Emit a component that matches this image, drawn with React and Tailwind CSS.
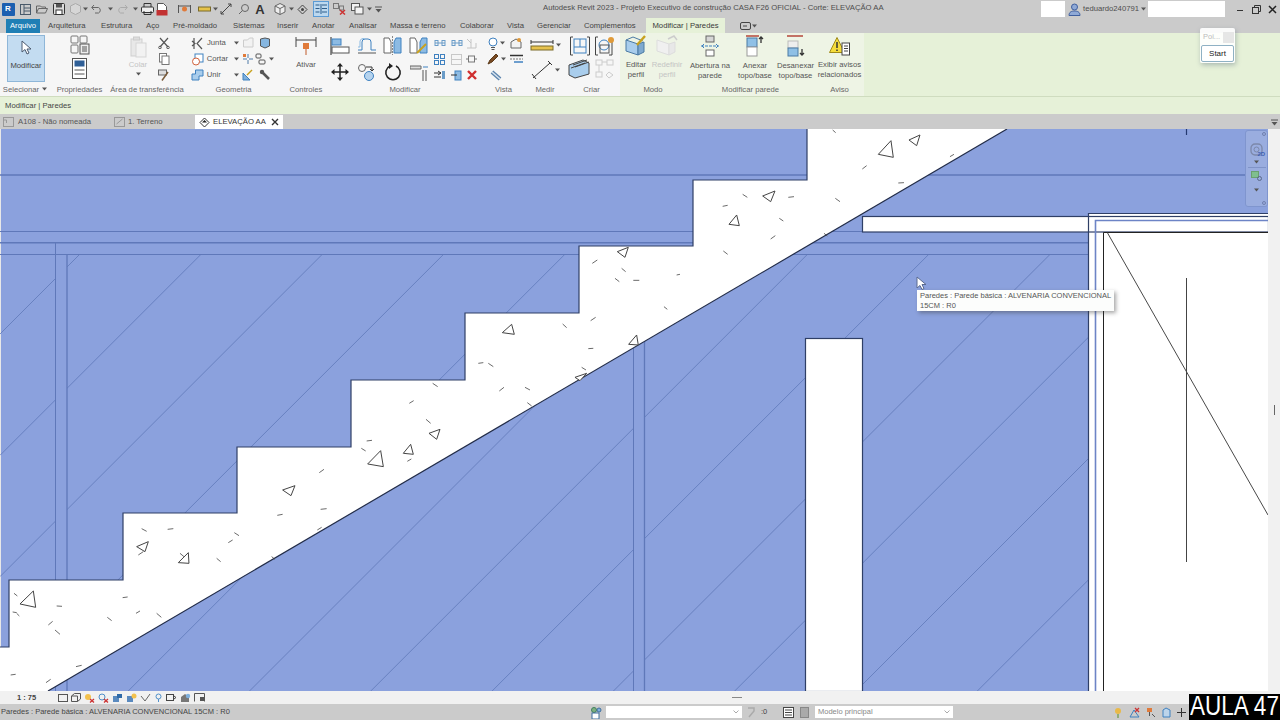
import React from "react";

const FONT = "font-['Liberation_Sans',Arial,sans-serif]";
const DK = "#4a4a4a";

const Ico = ({ w = 14, h = 14, className = "", children }) => (
  <svg width={w} height={h} viewBox={`0 0 ${w} ${h}`} fill="none" stroke={DK} strokeWidth="1" className={`shrink-0 ${className}`}>
    {children}
  </svg>
);
const Caret = () => (
  <svg width="5" height="4" viewBox="0 0 5 4" className="shrink-0"><path d="M0 .5h5L2.5 3.5z" fill="#555" /></svg>
);

/* ---------- quick access ---------- */
const Q = {
  logo: (
    <div className="w-[13px] h-[13px] bg-[#1c5fb0] rounded-[1px] flex items-center justify-center text-white text-[8px] font-bold leading-none">R</div>
  ),
  home: <Ico w={11} h={11}><rect x=".5" y=".5" width="10" height="10" stroke="#4a5a6a" /><path d="M4 .5v10M4 4h6.5M4 7h6.5" stroke="#4a5a6a" /></Ico>,
  open: <Ico w={12} h={10}><path d="M.5 9V2h4l1 1h4v1.5M.5 9l2-4.5h9L9.5 9z" stroke="#666" /></Ico>,
  save: <Ico w={12} h={12}><rect x=".5" y=".5" width="11" height="11" rx="1" fill="#dcdcdc" stroke="#333" /><rect x="3" y="1" width="6" height="3.5" fill="#555" stroke="none" /><rect x="3" y="7" width="6" height="4.5" fill="#fff" stroke="#333" /></Ico>,
  sync: <Ico w={11} h={12}><path d="M5.5.5l5 2.5v6l-5 2.5-5-2.5v-6z" fill="#d6d6d6" stroke="#aaa" /></Ico>,
  undo: <Ico w={12} h={10}><path d="M3 1 .7 3.5 3 6M1 3.5h6.5a3 3 0 010 5.5H4" stroke="#666" /></Ico>,
  redo: <Ico w={12} h={10}><path d="M9 1l2.3 2.5L9 6M11 3.5H4.500a3 3 0 000 5.500H8" stroke="#aaa" /></Ico>,
  print: <Ico w={13} h={12}><rect x=".5" y="4" width="12" height="5.500" rx="1" fill="#eee" stroke="#333" /><path d="M3 4V.5h7V4M3 8v3.500h7V8" stroke="#333" /></Ico>,
  pdf: <Ico w={12} h={13}><path d="M1.500.5h6l3 3v5h-9z" fill="#fff" stroke="#555" /><rect x=".5" y="7" width="11" height="5.500" fill="#c23232" stroke="none" /></Ico>,
  pin: <Ico w={13} h={12}><path d="M.5 2v8M12.500 2v8M.5 3h12" stroke="#555" /><circle cx="6.500" cy="6" r="2.500" fill="#e07a3a" stroke="none" /></Ico>,
  dim: <Ico w={13} h={10}><rect x=".5" y="3" width="12" height="4" fill="#e6c34a" stroke="#7a6a2a" /></Ico>,
  diag: <Ico w={12} h={12}><path d="M1 11 11 1M1 8v3h3M8 1h3v3" stroke="#444" /></Ico>,
  tag: <Ico w={11} h={11}><circle cx="7" cy="4" r="3.500" stroke="#666" /><path d="M1 10l3.500-3.500" stroke="#666" /></Ico>,
  cube: <Ico w={12} h={12}><path d="M6 .5l5 2.500v6l-5 2.500-5-2.500V3z" fill="#eee" stroke="#666" /><path d="M1 3l5 2.500L11 3M6 5.500v6" stroke="#666" /></Ico>,
  sect: <Ico w={11} h={11}><path d="M5.500 1 10 5.500 5.500 10 1 5.500z" stroke="#444" /><circle cx="5.500" cy="5.500" r="1.500" fill="#444" stroke="none" /></Ico>,
  thin: <div className="w-[16px] h-[16px] bg-[#bcd8ef] border border-[#5b9bd5] flex items-center justify-center"><Ico w={12} h={10}><path d="M.5 1h4M.5 4.500h4M.5 8h4M7 1h5M7 4.500h5M7 8h5M6 0v10" stroke="#2d5d8a" /></Ico></div>,
  closeW: <Ico w={13} h={12}><rect x=".5" y=".5" width="5" height="5" stroke="#777" /><rect x="6.500" y="3" width="4" height="4" stroke="#777" /><path d="M7 7l5 4.500M12 7l-5 4.500" stroke="#c33" strokeWidth="1.500" /></Ico>,
  switchW: <Ico w={13} h={12}><rect x=".5" y=".5" width="8" height="7" fill="#f3f3f3" stroke="#555" /><rect x="4" y="4" width="8" height="7" fill="#f3f3f3" stroke="#555" /></Ico>,
  dropdown: <Ico w={7} h={7}><path d="M0 1h7" stroke="#555" /><path d="M.5 3h6L3.500 6.500z" fill="#555" stroke="none" /></Ico>,
};

const QA = ({ w, children }) => <div style={{ width: w }} className="flex items-center justify-center h-full shrink-0">{children}</div>;

const TitleBar = () => (
  <div className="h-[18px] bg-[#cbcbcb] flex items-center relative text-[#4d4d4d]">
    <QA w={16}>{Q.logo}</QA>
    <QA w={18}>{Q.home}</QA>
    <QA w={16}>{Q.open}</QA>
    <QA w={18}>{Q.save}</QA>
    <QA w={14}>{Q.sync}</QA>
    <QA w={6}><Caret /></QA>
    <QA w={18}>{Q.undo}</QA>
    <QA w={8}><Caret /></QA>
    <QA w={16}>{Q.redo}</QA>
    <QA w={10}><Caret /></QA>
    <QA w={14}>{Q.print}</QA>
    <QA w={16}>{Q.pdf}</QA>
    <div className="w-[7px]" />
    <QA w={14}>{Q.pin}</QA>
    <div className="w-[5px]" />
    <QA w={16}>{Q.dim}</QA>
    <QA w={6}><Caret /></QA>
    <QA w={16}>{Q.diag}</QA>
    <QA w={18}>{Q.tag}</QA>
    <div className="w-[16px] text-[13px] font-bold leading-none text-[#333] text-center">A</div>
    <div className="w-[5px]" />
    <QA w={14}>{Q.cube}</QA>
    <QA w={8}><Caret /></QA>
    <QA w={14}>{Q.sect}</QA>
    <div className="w-[3px]" />
    <QA w={18}>{Q.thin}</QA>
    <QA w={18}>{Q.closeW}</QA>
    <QA w={18}>{Q.switchW}</QA>
    <QA w={6}><Caret /></QA>
    <QA w={12}>{Q.dropdown}</QA>
    <div className="ml-[159px] mb-[3px] text-[7.7px] leading-none whitespace-nowrap">
      Autodesk Revit 2023 - Projeto Executivo de construção CASA F26 OFICIAL - Corte: ELEVAÇÃO AA
    </div>
    <div className="ml-auto flex items-center h-full">
      <div className="w-[24px] h-[16px] bg-white" />
      <div className="w-[3px]" />
      <Ico w={13} h={13}><circle cx="6.500" cy="4" r="3" fill="#8fa9d6" stroke="#3f5f9f" /><path d="M1 12.500c0-3.500 2.500-4.500 5.500-4.500s5.500 1 5.500 4.500z" fill="#8fa9d6" stroke="#3f5f9f" /></Ico>
      <div className="ml-[2px] w-[58px] text-[7.7px] whitespace-nowrap">teduardo240791</div>
      <Caret />
      <div className="ml-[2px] w-[77px] h-[16px] bg-white" />
      <div className="w-[7px]" />
      <div className="w-[16px] flex justify-center"><div className="w-[6px] h-[1.500px] bg-[#333] mt-[3px]" /></div>
      <div className="w-[16px] flex justify-center">
        <Ico w={9} h={9}><rect x=".5" y="2.500" width="6" height="6" stroke="#333" /><path d="M2.500 2.500V.5h6v6H6.500" stroke="#333" /></Ico>
      </div>
      <div className="w-[16px] flex justify-center">
        <Ico w={9} h={9}><path d="M1 1l7 7M8 1 1 8" stroke="#222" strokeWidth="1.500" /></Ico>
      </div>
    </div>
  </div>
);

const TABS = [
  ["Arquitetura", 53],
  ["Estrutura", 45],
  ["Aço", 27],
  ["Pré-moldado", 60],
  ["Sistemas", 44],
  ["Inserir", 35],
  ["Anotar", 37],
  ["Analisar", 41],
  ["Massa e terreno", 70],
  ["Colaborar", 47],
  ["Vista", 30],
  ["Gerenciar", 47],
  ["Complementos", 62],
];

const TabRow = () => (
  <div className="h-[15px] bg-[#cbcbcb] flex items-end text-[7.7px] leading-none text-[#444]">
    <div className="ml-[6px] w-[34px] h-[14px] bg-[#1f7fb5] text-white flex items-center justify-center">Arquivo</div>
    <div className="w-[8px]" />
    {TABS.map(([t, w]) => (
      <div key={t} style={{ width: w }} className="h-[14px] flex items-center whitespace-nowrap">{t}</div>
    ))}
    <div className="w-[79px] h-[15px] bg-[#e6f1d8] flex items-center justify-center whitespace-nowrap text-[#3a3a3a]">Modificar | Paredes</div>
    <div className="ml-[15px] h-[14px] flex items-center gap-[1px]">
      <Ico w={11} h={8}><rect x=".5" y=".5" width="10" height="7" rx="1.500" stroke="#444" /><path d="M3 4h4" stroke="#444" /></Ico>
      <Caret />
    </div>
  </div>
);

/* ---------- ribbon ---------- */
const Panel = ({ w, label, green, children }) => (
  <div style={{ width: w }} className={`shrink-0 flex flex-col h-full ${green ? "bg-[#eef4e5]" : ""}`}>
    <div className="h-[50px] flex">{children}</div>
    <div className="h-[13px] flex items-center justify-center text-[7.7px] leading-none text-[#666] whitespace-nowrap">{label}</div>
  </div>
);
const Col = ({ w, children, className = "" }) => (
  <div style={{ width: w }} className={`flex flex-col items-center shrink-0 ${className}`}>{children}</div>
);
const Cell = ({ children, h = 16 }) => <div style={{ height: h }} className="flex items-center justify-center w-full">{children}</div>;

const Lbl = ({ a, b, gray }) => (
  <div className={`text-[7.7px] leading-[10px] text-center whitespace-nowrap mt-[4px] ${gray ? "text-[#c4c4c4]" : "text-[#555]"}`}>
    {a}<br />{b}
  </div>
);

const I = {
  arrow: <Ico w={12} h={16}><path d="M2 1v11l3-2.500L7 14l2-1-2-4h4z" fill="#fff" stroke="#4a5a70" /></Ico>,
  family: <Ico w={20} h={20}><rect x="1" y="1" width="7" height="7" rx="1" stroke="#777" /><rect x="10" y="1" width="7" height="7" rx="1" stroke="#777" /><rect x="1" y="10" width="7" height="8" rx="1" stroke="#777" /><rect x="10" y="9" width="9" height="10" fill="#eee" stroke="#555" /><path d="M12 12h5M12 14h5M12 16h5" stroke="#555" /></Ico>,
  props: <Ico w={15} h={21}><rect x=".5" y=".5" width="14" height="20" fill="#fff" stroke="#555" /><rect x="2.500" y="2.500" width="10" height="6" fill="#2f5f97" stroke="none" /><path d="M2.500 12h10M2.500 16h10" stroke="#555" /></Ico>,
  paste: <Ico w={17} h={22}><rect x="1" y="3" width="11" height="17" fill="#e8e8e8" stroke="#cfcfcf" /><rect x="6" y="7" width="10" height="14" fill="#f2f2f2" stroke="#d5d5d5" /><rect x="3.500" y="1" width="6" height="3" fill="#ddd" stroke="#ccc" /></Ico>,
  cut: <Ico w={12} h={12}><path d="M2 1l8 9M10 1 2 10" stroke="#555" strokeWidth="1.200" /><circle cx="2" cy="10.500" r="1.300" stroke="#555" /><circle cx="10" cy="10.500" r="1.300" stroke="#555" /></Ico>,
  copy: <Ico w={11} h={12}><rect x=".5" y=".5" width="7" height="8.500" fill="#fff" stroke="#777" /><rect x="3" y="3" width="7" height="8.500" fill="#fff" stroke="#777" /></Ico>,
  brush: <Ico w={12} h={12}><rect x=".5" y="1" width="8" height="5" fill="#ddd" stroke="#666" /><path d="M10 3 4 11.500" stroke="#7a5b3a" strokeWidth="1.500" /></Ico>,
  join: <Ico w={14} h={13}><path d="M3 1v11M1 4l3 2.500-3 2.500M11 1 6 6.500l5 5.500" stroke="#555" strokeWidth="1.200" /></Ico>,
  cutG: <Ico w={13} h={13}><rect x="4" y="1" width="8" height="8" fill="#fff" stroke="#3f81c0" /><circle cx="5" cy="8.500" r="3.500" fill="#fff" stroke="#d0603a" /></Ico>,
  unite: <Ico w={13} h={12}><path d="M4.500 1H12v6H8v4H1V5h3.500z" fill="#a9cdec" stroke="#3f81c0" /></Ico>,
  gPage: <Ico w={12} h={12}><path d="M1.500 3h4l2-2H11v9H1.500z" fill="#f2f2f2" stroke="#ccc" /></Ico>,
  gWall: <Ico w={12} h={12}><path d="M1.500 2 6 1l4.500 1v7L6 11 1.500 9z" fill="#86b6e0" stroke="#555" /></Ico>,
  gSplit: <Ico w={12} h={12}><path d="M1 6h4M7 6h4M6 1v4M6 7v4" stroke="#4f7aa8" /><rect x="1" y="1" width="3" height="3" fill="#e07a3a" stroke="none" /></Ico>,
  gShape: <Ico w={13} h={12}><rect x="1" y="1" width="5" height="4" rx="1" stroke="#555" /><rect x="4" y="7" width="6" height="4" rx="1" stroke="#555" /></Ico>,
  gCham: <Ico w={12} h={12}><path d="M1 11V4l7 7z" fill="#7fb0dd" stroke="#3f81c0" /><path d="M5 6l5-5" stroke="#c8a11e" strokeWidth="1.500" /></Ico>,
  wrench: <Ico w={12} h={12}><path d="M2 2l8 8" stroke="#555" strokeWidth="2.500" /><circle cx="3" cy="3" r="2.200" fill="#555" stroke="none" /></Ico>,
  align: <Ico w={20} h={18}><path d="M1 0v18" stroke="#555" strokeWidth="1.300" /><rect x="2" y="2" width="9" height="6" fill="#8dbbe3" stroke="#3f81c0" /><rect x="2" y="10" width="17" height="6" fill="#fff" stroke="#555" /></Ico>,
  offset: <Ico w={20} h={16}><path d="M1 12h4V4q0-3 3-3h3q3 0 3 3v8h5" stroke="#3f81c0" /><path d="M1 15h18" stroke="#555" /><path d="M1 9h2V3q0-2.500 5-3" stroke="#8dbbe3" /></Ico>,
  mirrorA: <Ico w={19} h={19}><path d="M1 2h5l2 4v11H1z" fill="#fff" stroke="#666" /><path d="M9.500 0v19" stroke="#888" strokeDasharray="2 1" /><path d="M18 2h-5l-2 4v11h7z" fill="#8dbbe3" stroke="#3f81c0" /></Ico>,
  mirrorB: <Ico w={19} h={19}><path d="M1 2h5l2 4v11H1z" fill="#fff" stroke="#666" /><path d="M18 2h-5l-2 4v11h7z" fill="#8dbbe3" stroke="#3f81c0" /><path d="M8 17 17 8" stroke="#c8a11e" strokeWidth="2" /></Ico>,
  move: <Ico w={18} h={18}><path d="M9 1v16M1 9h16" stroke="#222" strokeWidth="1.500" /><path d="M9 0l3 3.500H6zM9 18l-3-3.500h6zM0 9l3.500-3v6zM18 9l-3.500 3V6z" fill="#222" stroke="none" /></Ico>,
  copy2: <Ico w={18} h={18}><circle cx="5" cy="5" r="3.500" stroke="#666" /><circle cx="12" cy="13" r="4.500" fill="#b5d3ee" stroke="#3f81c0" /><path d="M9 4h6v4M13 6l2 2 2-2" stroke="#333" /></Ico>,
  rotate: <Ico w={18} h={18}><path d="M12 3a7.200 7.200 0 11-6 0" stroke="#222" strokeWidth="1.600" /><path d="M5 0v6l4-3z" fill="#222" stroke="none" /></Ico>,
  trim: <Ico w={18} h={19}><path d="M0 4h11v3H0z" fill="#ddd" stroke="#666" /><path d="M13 8v11M16 8v11" stroke="#555" /><path d="M13 5h5" stroke="#3f81c0" /></Ico>,
  sMir: <Ico w={12} h={10}><path d="M1 5h10" stroke="#6a9cc8" /><rect x="1" y="2.500" width="3" height="5" stroke="#6a9cc8" /><rect x="8" y="2.500" width="3" height="5" stroke="#6a9cc8" /></Ico>,
  sGrid: <Ico w={11} h={11}><rect x=".5" y=".5" width="4" height="4" stroke="#3f81c0" /><rect x="6.500" y=".5" width="4" height="4" stroke="#3f81c0" /><rect x=".5" y="6.500" width="4" height="4" stroke="#3f81c0" /><rect x="6.500" y="6.500" width="4" height="4" stroke="#3f81c0" /></Ico>,
  sGray: <Ico w={11} h={11}><rect x=".5" y=".5" width="10" height="10" stroke="#c8c8c8" /><path d="M.5 5.500h10" stroke="#c8c8c8" /></Ico>,
  sOff: <Ico w={11} h={11}><path d="M1 1l4 4M5 1v9M1 10h9V5" stroke="#c4c4c4" /></Ico>,
  sBox: <Ico w={11} h={10}><rect x="2.500" y="2" width="6" height="6" stroke="#777" /><path d="M0 5h2.500M8.500 5H11" stroke="#777" /></Ico>,
  sArr: <Ico w={11} h={10}><path d="M0 3h7M4 1l3 2-3 2M0 7h7" stroke="#333" /><rect x="8" y="1" width="3" height="8" fill="#6a9cc8" stroke="none" /></Ico>,
  sArrB: <Ico w={11} h={11}><rect x="4" y="1" width="6" height="9" fill="#8dbbe3" stroke="#3f81c0" /><path d="M0 5h6" stroke="#333" /></Ico>,
  redX: <Ico w={10} h={10}><path d="M1 1l8 8M9 1 1 9" stroke="#cf2e2e" strokeWidth="2.400" /></Ico>,
  bulb: <Ico w={10} h={13}><circle cx="5" cy="5" r="4" fill="#fff" stroke="#3f81c0" /><path d="M3 10.500h4M3.500 12.500h3" stroke="#555" /></Ico>,
  house: <Ico w={12} h={12}><path d="M1 11V5l5-3 5 3v6z" fill="#f2f2f2" stroke="#666" /><circle cx="9" cy="3" r="2" fill="#e09a3a" stroke="none" /></Ico>,
  pen: <Ico w={12} h={12}><path d="M1 11l2-4 6-6 2 2-6 6z" fill="#7a4a22" stroke="#5a3a1a" /></Ico>,
  lines: <Ico w={13} h={10}><path d="M0 1.500h13" stroke="#333" strokeWidth="1.500" /><path d="M0 5h13" stroke="#777" strokeDasharray="2 1" /><path d="M4 8h9" stroke="#3f81c0" strokeWidth="1.500" /></Ico>,
  link: <Ico w={12} h={12}><path d="M2 3l8 7" stroke="#5b83ad" strokeWidth="4" /><path d="M2 3l8 7" stroke="#d7e3ee" strokeWidth="1.500" /></Ico>,
  ruler: <Ico w={24} h={16}><path d="M1 5h22M1 3v4M23 3v4" stroke="#333" /><rect x="1" y="9" width="22" height="4" fill="#e7c34f" stroke="#7a6a2a" /></Ico>,
  dimD: <Ico w={22} h={20}><path d="M2 18 19 3M1 14l4 5M17 1l4 4" stroke="#333" /></Ico>,
  bracket: <Ico w={20} h={20}><path d="M3 1H.5v18H3M17 1h2.500v18H17" stroke="#444" /><rect x="4" y="3" width="12" height="14" stroke="#3f81c0" /><path d="M4 11h12M10 3v8" stroke="#3f81c0" /></Ico>,
  bracket2: <Ico w={20} h={20}><path d="M3 1H.5v18H3M17 4v15h-3" stroke="#444" /><circle cx="9" cy="9" r="5" stroke="#3f81c0" /><rect x="5" y="9" width="9" height="8" stroke="#555" /><circle cx="16" cy="4" r="3" fill="#e09a3a" stroke="none" /></Ico>,
  group: <Ico w={22} h={20}><path d="M1 6l14-5 6 3v11L7 19l-6-3z" fill="#a9cdec" stroke="#444" /><path d="M5 6l14-5M3 9l14-5M7 8l14-5" stroke="#444" /></Ico>,
  grayGroup: <Ico w={19} h={20}><rect x="1" y="1" width="6" height="5" stroke="#ccc" /><rect x="12" y="1" width="6" height="5" stroke="#ccc" /><rect x="1" y="13" width="6" height="5" stroke="#ccc" /><path d="M14 13l4 3-4 3-3-3z" stroke="#ccc" /><path d="M7 3h5M4 6v7" stroke="#ccc" /></Ico>,
  edit: <Ico w={22} h={21}><path d="M1 5l12 4v11L1 16z" fill="#a9cdec" stroke="#4b7aa4" /><path d="M13 9l6-2v10l-6 3z" fill="#7fa9cf" stroke="#4b7aa4" /><path d="M1 5l7-3 10 4" stroke="#4b7aa4" /><path d="M12 10l8-9" stroke="#c8a11e" strokeWidth="2.400" /></Ico>,
  reset: <Ico w={22} h={21}><path d="M1 5l12 4v11L1 16z" fill="#f0f0f0" stroke="#ddd" /><path d="M13 9l6-2v10l-6 3z" fill="#e8e8e8" stroke="#ddd" /><path d="M12 4l6-3 3 4" stroke="#ccc" strokeWidth="1.500" /></Ico>,
  opening: <Ico w={18} h={22}><rect x="5" y="1" width="8" height="6" fill="#d6d6d6" stroke="#666" /><rect x="5" y="15" width="8" height="6" fill="#fff" stroke="#666" /><path d="M0 11h18" stroke="#3f81c0" strokeDasharray="3 1" /><path d="M3 9l-2 2 2 2M15 9l2 2-2 2" stroke="#3f81c0" /></Ico>,
  attach: <Ico w={18} h={22}><path d="M0 1h13" stroke="#b5473a" strokeWidth="1.500" /><rect x="1" y="3" width="10" height="9" fill="#8fc0e6" stroke="#4b7aa4" /><rect x="1" y="12" width="10" height="9" fill="#fff" stroke="#999" /><path d="M15 8V2M13 4l2-2 2 2" stroke="#333" strokeWidth="1.300" /></Ico>,
  detach: <Ico w={18} h={22}><path d="M0 1h16" stroke="#b5473a" strokeWidth="1.500" /><rect x="1" y="6" width="10" height="7" fill="#eee" stroke="#bbb" /><rect x="1" y="13" width="10" height="8" fill="#8fc0e6" stroke="#4b7aa4" /><path d="M15 14v6M13 18l2 2 2-2" stroke="#333" strokeWidth="1.300" /></Ico>,
  warn: <Ico w={21} h={20}><path d="M8 1.500l7.500 15H.5z" fill="#f5dc3c" stroke="#a08a1a" /><path d="M8 6v6M8 13.500v1.500" stroke="#333" strokeWidth="1.500" /><rect x="13" y="7" width="7.500" height="12" fill="#fff" stroke="#444" /><path d="M15 10h4M15 12.500h4M15 15h4" stroke="#444" /></Ico>,
};

const Dd = ({ icon, text }) => (
  <div className="flex items-center h-[16px] w-full gap-[2px]">
    <div className="w-[14px] flex justify-center">{icon}</div>
    <span className="text-[7.7px] text-[#555] w-[26px] leading-none">{text}</span>
    <Caret />
  </div>
);

const Ribbon = () => (
  <div className="h-[64px] bg-[#e6f1d8] flex border-b border-[#cfdcbf]">
    <div className="flex h-full w-[620px] bg-[#f6f6f6] shrink-0">
      <Panel w={50} label={<span className="flex items-center gap-[3px]">Selecionar <Caret /></span>}>
        <div className="ml-[7px] mt-[2px] w-[38px] h-[47px] bg-[#c3dcf1] border border-[#8eb6d8] flex flex-col items-center pt-[4px] gap-[6px] text-[7.7px] leading-none text-[#444]">
          {I.arrow}
          <span>Modificar</span>
        </div>
      </Panel>
      <Panel w={59} label="Propriedades">
        <Col w={59} className="pt-[2px] gap-[3px]">
          {I.family}
          {I.props}
        </Col>
      </Panel>
      <Panel w={76} label="Área de transferência">
        <Col w={44} className="pt-[3px] pl-[14px]">
          {I.paste}
          <span className="text-[7.7px] text-[#c4c4c4] mt-[3px] leading-none">Colar</span>
          <span className="mt-[3px]"><Caret /></span>
        </Col>
        <Col w={22} className="pt-[2px]">
          <Cell>{I.cut}</Cell><Cell>{I.copy}</Cell><Cell>{I.brush}</Cell>
        </Col>
      </Panel>
      <Panel w={97} label="Geometria">
        <Col w={54} className="pt-[2px] pl-[6px]">
          <Dd icon={I.join} text="Junta" />
          <Dd icon={I.cutG} text="Cortar" />
          <Dd icon={I.unite} text="Unir" />
        </Col>
        <Col w={17} className="pt-[2px]">
          <Cell>{I.gPage}</Cell><Cell>{I.gSplit}</Cell><Cell>{I.gCham}</Cell>
        </Col>
        <Col w={17} className="pt-[2px]">
          <Cell>{I.gWall}</Cell>
          <Cell><span className="flex items-center gap-[1px]">{I.gShape}<Caret /></span></Cell>
          <Cell>{I.wrench}</Cell>
        </Col>
      </Panel>
      <Panel w={48} label="Controles">
        <Col w={48} className="pt-[3px] gap-[6px]">
          <Ico w={22} h={20}><path d="M1 1v10M21 1v10M1 4h20" stroke="#444" /><rect x="8" y="7" width="6" height="6" fill="#e07a3a" stroke="none" /><path d="M11 13v6" stroke="#c05a2a" /></Ico>
          <span className="text-[7.7px] text-[#555] leading-none -mt-[1px]">Ativar</span>
        </Col>
      </Panel>
      <Panel w={150} label="Modificar">
        <div className="flex pt-[2px]">
          <div className="flex flex-col w-[101px] gap-[5px]">
            <div className="flex items-center justify-between h-[21px] pr-[3px]">{I.align}{I.offset}{I.mirrorA}{I.mirrorB}</div>
            <div className="flex items-center justify-between h-[21px] pr-[3px] pl-[1px]">{I.move}{I.copy2}{I.rotate}{I.trim}</div>
          </div>
          <Col w={17}><Cell>{I.sMir}</Cell><Cell>{I.sGrid}</Cell><Cell>{I.sArr}</Cell></Col>
          <Col w={17}><Cell>{I.sMir}</Cell><Cell>{I.sGray}</Cell><Cell>{I.sArrB}</Cell></Col>
          <Col w={13}><Cell>{I.sOff}</Cell><Cell>{I.sBox}</Cell><Cell>{I.redX}</Cell></Col>
        </div>
      </Panel>
      <Panel w={47} label="Vista">
        <Col w={26} className="pt-[2px] pl-[6px]">
          <Cell><span className="flex items-center gap-[2px]">{I.bulb}<Caret /></span></Cell>
          <Cell><span className="flex items-center gap-[2px]">{I.pen}<Caret /></span></Cell>
          <Cell>{I.link}</Cell>
        </Col>
        <Col w={20} className="pt-[2px]"><Cell>{I.house}</Cell><Cell>{I.lines}</Cell></Col>
      </Panel>
      <Panel w={36} label="Medir">
        <Col w={36} className="pt-[4px] gap-[7px]">
          <span className="flex items-center gap-[2px]">{I.ruler}<Caret /></span>
          <span className="flex items-center gap-[2px]">{I.dimD}<Caret /></span>
        </Col>
      </Panel>
      <Panel w={57} label="Criar">
        <Col w={27} className="pt-[3px] gap-[3px] items-end">{I.bracket}{I.group}</Col>
        <Col w={26} className="pt-[3px] gap-[3px] pl-[3px]">{I.bracket2}{I.grayGroup}</Col>
      </Panel>
    </div>
    <Panel w={66} label="Modo" green>
      <Col w={32} className="pt-[2px]">{I.edit}<Lbl a="Editar" b="perfil" /></Col>
      <Col w={30} className="pt-[2px]">{I.reset}<Lbl a="Redefinir" b="perfil" gray /></Col>
    </Panel>
    <Panel w={129} label="Modificar parede" green>
      <Col w={48} className="pt-[2px]">{I.opening}<Lbl a="Abertura na" b="parede" /></Col>
      <Col w={42} className="pt-[2px]">{I.attach}<Lbl a="Anexar" b="topo/base" /></Col>
      <Col w={39} className="pt-[2px]">{I.detach}<Lbl a="Desanexar" b="topo/base" /></Col>
    </Panel>
    <Panel w={49} label="Aviso" green>
      <Col w={49} className="pt-[3px]">{I.warn}<Lbl a="Exibir avisos" b="relacionados" /></Col>
    </Panel>
  </div>
);

const ViewTabs = () => (
  <div className="h-[15px] bg-[#cbcbcb] flex items-end text-[7.7px] leading-none text-[#555] relative">
    <div className="w-[114px] h-[14px] flex items-center pl-[3px] gap-[4px]">
      <Ico w={11} h={10}><rect x=".5" y=".5" width="10" height="9" stroke="#999" /><path d="M.5 3h3v3" stroke="#999" /></Ico>
      A108 - Não nomeada
    </div>
    <div className="w-[81px] h-[14px] flex items-center gap-[3px]">
      <Ico w={11} h={10}><rect x=".5" y=".5" width="10" height="9" stroke="#999" /><path d="M2.500 7l6-5" stroke="#999" /></Ico>
      1. Terreno
    </div>
    <div className="w-[88px] h-[14px] bg-white flex items-center pl-[4px] text-[#333]">
      <Ico w={11} h={11}><path d="M5.500 1 10 5.500 5.500 10 1 5.500z" stroke="#333" /><path d="M3 5.500 5.500 3l2.500 2.500z" fill="#222" stroke="none" /></Ico>
      <span className="ml-[3px] w-[58px] whitespace-nowrap">ELEVAÇÃO AA</span>
      <Ico w={8} h={8}><path d="M1 1l6 6M7 1 1 7" stroke="#333" strokeWidth="1.400" /></Ico>
    </div>
    <div className="ml-auto mr-[2px] mb-[3px]">{Q.dropdown}</div>
  </div>
);

/* ---------- drawing ---------- */
const WALL = "#8ba1dd";
const LINE = "#5f78b9";
const HATCH = Array.from({ length: 15 }, (_, i) => 91 + i * 121.3);

const TRIS7 = [[100,483,60,522,107,532],[445,335,410,350,435,365],[565,368,535,398,567,400],[885,167,848,180,873,197]];
const DASH7 = [[42,490,52,498],[38,546,50,548],[50,550,58,558],[170,528,186,529],[145,585,158,574],[165,600,180,613],[32,735,47,733],[138,758,152,748],[228,710,245,706],[425,296,440,304],[503,298,520,296],[415,375,430,365],[540,370,552,380],[650,385,662,395],[685,338,698,330],[703,308,717,317],[832,256,848,253],[958,128,972,118],[962,238,980,236],[952,300,965,292],[815,380,825,388],[368,503,383,501],[408,550,420,543],[322,562,335,572],[470,550,484,562]];
const TRIS8 = [[515,253,487,278,523,283],[890,285,866,313,895,315],[740,400,705,412,720,422],[300,568,267,580,290,598],[212,613,190,640,220,643],[122,632,83,672,130,680],[865,22,832,35,855,52]];
const DASH8 = [[757,70,772,60],[845,85,857,95],[825,115,838,125],[880,121,898,121],[1010,105,1020,103],[972,200,982,208],[752,242,767,232],[668,252,680,263],[745,326,760,325],[725,382,738,390],[415,370,430,368],[445,370,460,380],[478,453,492,442],[555,442,570,450],[562,488,575,498],[278,430,293,440],[208,490,221,482],[258,538,272,550],[80,603,96,601],[64,625,77,633],[202,664,214,657]];
const TRIS9 = [[633,47,595,88,640,97],[720,30,687,45,710,62],[285,198,248,213,272,230],[170,270,147,298,178,302]];
const DASH9 = [[458,15,467,23],[547,132,560,122],[810,95,822,88],[655,174,672,173],[466,220,480,230],[325,217,342,215],[188,208,202,217],[128,244,143,241],[298,280,310,288],[272,342,286,332],[130,378,143,388],[432,325,442,333]];

const Marks = ({ ox, oy, tris, dashes }) => (
  <g transform={`translate(${ox} ${oy}) scale(0.3333)`}>
    {tris.map((t, i) => (
      <polygon key={i} points={t.join(" ")} fill="#fff" stroke="#444" strokeWidth="1" vectorEffect="non-scaling-stroke" />
    ))}
    {dashes.map((d, i) => (
      <line key={i} x1={d[0]} y1={d[1]} x2={d[2]} y2={d[3]} stroke="#444" strokeWidth="0.8" vectorEffect="non-scaling-stroke" />
    ))}
  </g>
);

const Drawing = () => (
  <svg width="1268" height="562" viewBox="0 129 1268 562" className="block shrink-0">
    <rect x="0" y="129" width="1268" height="562" fill={WALL} />
    <rect x="0" y="129" width="1" height="562" fill="#e8e8e8" />
    <path d="M0 175H1268" stroke={LINE} strokeWidth="1.500" />
    <path d="M0 231.500H1088M0 254.500H1088" stroke={LINE} strokeWidth="1" />
    <path d="M0 242.800H1088" stroke={LINE} strokeWidth="1.500" />
    <g stroke={LINE} strokeWidth="0.8">
      {HATCH.map((s, i) => {
        const sum = s + 243;
        return <line key={i} x1={Math.max(0, sum - 691)} y1={Math.min(691, sum)} x2={sum - 254.500} y2="254.500" />;
      })}
    </g>
    <rect x="55.500" y="255" width="11.500" height="436" fill={WALL} />
    <rect x="633" y="340" width="11" height="351" fill={WALL} />
    <path d="M55.500 243V691M633.500 340V691" stroke={LINE} strokeWidth="1" />
    <path d="M67 255V691M644.500 340V691" stroke={LINE} strokeWidth="1.300" />
    <polygon
      points="0,647 9,647 9,580 123,580 123,513 237,513 237,447 351,447 351,380 465,380 465,313 579,313 579,246 693,246 693,180 807,180 807,129 1007,129 48,691 0,691"
      fill="#fff"
    />
    <path d="M0 647H9V580H123V513H237V447H351V380H465V313H579V246H693V180H807V129" stroke="#2f3f66" strokeWidth="1.200" fill="none" />
    <path d="M1007 129 48 691" stroke="#222c48" strokeWidth="1.200" />
    <Marks ox={0} oy={430} tris={TRIS7} dashes={DASH7} />
    <Marks ox={340} oy={240} tris={TRIS8} dashes={DASH8} />
    <Marks ox={680} oy={125} tris={TRIS9} dashes={DASH9} />
    <rect x="805.500" y="338.500" width="57" height="353" fill="#fff" stroke="#2f3f66" strokeWidth="1.200" />
    <rect x="1088" y="213" width="180" height="478" fill="#fff" />
    <rect x="862.500" y="216.500" width="406" height="15.500" fill="#fff" stroke="#2f3f66" strokeWidth="1.200" />
    <path d="M1088.500 691V213.500H1268" stroke="#2f3f66" strokeWidth="1.200" fill="none" />
    <path d="M1095.500 691V220.500H1268" stroke="#6d84c6" strokeWidth="1.600" fill="none" />
    <path d="M1103.500 691V232.500H1268" stroke="#222" strokeWidth="1" fill="none" />
    <path d="M1107 232 1268 515" stroke="#333" strokeWidth="0.9" />
    <path d="M1186.500 278V562" stroke="#444" strokeWidth="1" />
    <path d="M1186.500 129V135" stroke="#24386f" strokeWidth="1.200" />
  </svg>
);

const NavBar = () => (
  <div className="absolute left-[1245px] top-[1px] w-[23px] h-[77px] rounded-[3px] bg-[#9aaddf] border border-[#7f95ce] flex flex-col items-center">
    <div className="self-end mr-[1px] mt-[1px] w-[4px] h-[4px] rounded-full border border-[#6f7fae]" />
    <div className="mt-[7px] relative">
      <Ico w={14} h={14}><rect x="1" y="1" width="11" height="11" rx="4" stroke="#7c88aa" strokeWidth="1.300" /><circle cx="6.500" cy="6.500" r="2.500" stroke="#7c88aa" /></Ico>
      <span className="absolute left-[8px] top-[8px] text-[6px] leading-none font-bold text-[#3e5fb0]">2D</span>
    </div>
    <div className="mt-[3px]"><Caret /></div>
    <div className="mt-[3px] w-[18px] h-[1px] bg-[#8094c8]" />
    <div className="mt-[3px] relative">
      <Ico w={12} h={11}><rect x=".5" y=".5" width="7" height="6" fill="#7fbf8f" stroke="#6aa070" /><circle cx="8.500" cy="7.500" r="2" stroke="#5a6a8a" /></Ico>
    </div>
    <div className="mt-[6px]"><Caret /></div>
    <div className="mt-auto self-end mr-[1px] mb-[1px] w-[4px] h-[4px] rounded-full border border-[#6f7fae]" />
  </div>
);

const ViewBar = () => (
  <div className="h-[13px] bg-[#f1f1f1] flex items-center relative">
    <span className="ml-[17px] w-[41px] text-[7.5px] font-bold text-[#444] leading-none">1 : 75</span>
    <div className="flex items-center gap-[3px]">
      <Ico w={10} h={8}><rect x=".5" y=".5" width="9" height="7" stroke="#555" /></Ico>
      <Ico w={10} h={9}><path d="M.5 3h6v5.500H.5zM.5 3l3-2.500h6V6L6.500 8.500" stroke="#555" /></Ico>
      <Ico w={11} h={10}><circle cx="4" cy="4" r="3" fill="#f2c14e" stroke="none" /><path d="M6 6l4 3.500M10 6 6 9.500" stroke="#c33" strokeWidth="1.300" /></Ico>
      <Ico w={11} h={10}><circle cx="4" cy="4" r="3" stroke="#4f8fc9" /><path d="M6 6l4 3.500M10 6 6 9.500" stroke="#c33" strokeWidth="1.300" /></Ico>
      <Ico w={11} h={10}><rect x="1" y="3" width="6" height="6" fill="#5a8abf" stroke="none" /><rect x="5" y="1" width="5" height="4" fill="#2f6aa8" stroke="none" /></Ico>
      <Ico w={11} h={10}><rect x="1" y="3" width="6" height="6" fill="#5a8abf" stroke="none" /><circle cx="8" cy="3" r="2.500" fill="#f2c14e" stroke="none" /></Ico>
      <Ico w={11} h={10}><path d="M1 3l4 5 5-7" stroke="#666" /></Ico>
      <Ico w={9} h={10}><circle cx="4.500" cy="3.500" r="2.500" stroke="#4f8fc9" /><path d="M4.500 6v3" stroke="#4f8fc9" /></Ico>
      <Ico w={11} h={9}><rect x=".5" y="1.500" width="7" height="6" stroke="#444" /><path d="M8 3l2 1.500L8 6" stroke="#444" /></Ico>
      <Ico w={11} h={10}><path d="M1 9V4l4-3 4 3v5z" fill="#777" stroke="none" /><circle cx="8" cy="3" r="2.200" fill="#7fb0dd" stroke="none" /></Ico>
      <Ico w={11} h={9}><path d="M.5 8.500V.5h10v8" stroke="#555" /><rect x="6" y="4" width="4" height="4" fill="#555" stroke="none" /></Ico>
    </div>
    <div className="absolute left-[732px] top-[6px] w-[10px] h-[1px] bg-[#888]" />
  </div>
);

const StatusBar = () => (
  <div className="h-[16px] bg-[#cbcbcb] flex items-center text-[7.5px] leading-none text-[#444]">
    <span className="ml-[1px] w-[589px] whitespace-nowrap">Paredes : Parede básica : ALVENARIA CONVENCIONAL 15CM : R0</span>
    <Ico w={12} h={13}><circle cx="4" cy="4" r="2.500" fill="#7fb07f" stroke="#3f7f5f" /><circle cx="9" cy="4" r="2" fill="#7fb0dd" stroke="#3f6f9f" /><rect x="2" y="7" width="7" height="6" fill="#fff" stroke="#3f6f9f" /></Ico>
    <div className="ml-[4px] w-[136px] h-[12px] bg-white flex items-center justify-end pr-[3px]">
      <Ico w={6} h={4}><path d="M.5.5 3 3 5.500.5" stroke="#aaa" /></Ico>
    </div>
    <Ico w={8} h={11} className="ml-[5px]"><path d="M1 1h6v3L2 10" stroke="#aaa" strokeWidth="1.500" /></Ico>
    <span className="ml-[6px] w-[22px]">:0</span>
    <Ico w={11} h={11}><rect x=".5" y=".5" width="10" height="10" fill="#fff" stroke="#444" /><path d="M2 3h7M2 5.500h7M2 8h7" stroke="#444" /></Ico>
    <Ico w={9} h={11} className="ml-[6px]"><rect x=".5" y=".5" width="8" height="10" fill="#aaa" stroke="#888" /></Ico>
    <div className="ml-[6px] w-[138px] h-[12px] bg-white flex items-center justify-between px-[3px] text-[#888]">
      Modelo principal
      <Ico w={6} h={4}><path d="M.5.5 3 3 5.500.5" stroke="#aaa" /></Ico>
    </div>
    <div className="ml-[160px] flex items-center gap-[6px]">
      <Ico w={10} h={11}><circle cx="5" cy="4" r="3" fill="#e9b949" stroke="none" /><path d="M5 7v4" stroke="#7fa35a" strokeWidth="1.500" /></Ico>
      <Ico w={11} h={11}><path d="M1 10l4-7 5 7z" stroke="#3f81c0" /><path d="M6 1l4 4M10 1 6 5" stroke="#c33" strokeWidth="1.300" /></Ico>
      <Ico w={10} h={11}><rect x="1" y="1" width="5" height="4" fill="#e07a3a" stroke="none" /><path d="M3.500 5v4M6 7l3 3" stroke="#555" /></Ico>
      <Ico w={9} h={11}><path d="M1 10V3l3-2 4 2v7z" fill="#bcd4ea" stroke="#3f81c0" /></Ico>
      <Ico w={9} h={9}><path d="M4.500 0v9M0 4.500h9" stroke="#333" /></Ico>
    </div>
  </div>
);

export default function App() {
  return (
    <div className={`relative w-[1280px] h-[720px] overflow-hidden bg-[#cbcbcb] flex flex-col ${FONT}`}>
      <TitleBar />
      <TabRow />
      <Ribbon />
      <div className="h-[17px] bg-[#e6f1d8] flex items-center pl-[5px] text-[7.7px] leading-none text-[#444]">Modificar | Paredes</div>
      <ViewTabs />
      <div className="relative flex-1 flex bg-[#f1f1f1] min-h-0">
        <Drawing />
        <div className="flex-1 flex items-center justify-center">
          <div className="w-[1px] h-[10px] bg-[#666]" />
        </div>
        <NavBar />
        <svg width="11" height="15" viewBox="0 0 11 15" className="absolute left-[916px] top-[147px]">
          <path d="M1 1v11l3-2.500 2 4 2-1-2-4h4z" fill="#fff" stroke="#5a6a90" />
        </svg>
        <div className="absolute left-[917px] top-[161px] w-[197px] h-[21px] bg-[#fcfdfc] shadow-[2px_2px_4px_rgba(60,60,60,0.45)] px-[3px] pt-[1px] text-[7.5px] leading-[9.500px] text-[#555] whitespace-nowrap">
          Paredes : Parede básica : ALVENARIA CONVENCIONAL<br />15CM : R0
        </div>
      </div>
      <ViewBar />
      <StatusBar />
      <div className="absolute left-[1200px] top-[28px] w-[35px] h-[35px] bg-white/90 rounded-[2px] shadow-[1px_2px_5px_rgba(80,100,120,0.4)] flex flex-col p-[1px]">
        <div className="flex items-center h-[16px] text-[7.5px] text-[#bbb] leading-none pl-[2px]">
          Poi...
          <div className="ml-auto w-[11px] h-[11px] bg-[#e6e6e6]" />
        </div>
        <div className="h-[17px] bg-white border border-[#8fb1c4] rounded-[2px] flex items-center justify-center text-[8px] leading-none text-[#222]">Start</div>
      </div>
      <div className="absolute left-[1189px] top-[694px] w-[91px] h-[26px] bg-black text-white text-[22.5px] leading-[26px] flex justify-center">
        <span className="inline-block scale-y-[1.2] whitespace-nowrap">AULA 47</span>
      </div>
    </div>
  );
}
